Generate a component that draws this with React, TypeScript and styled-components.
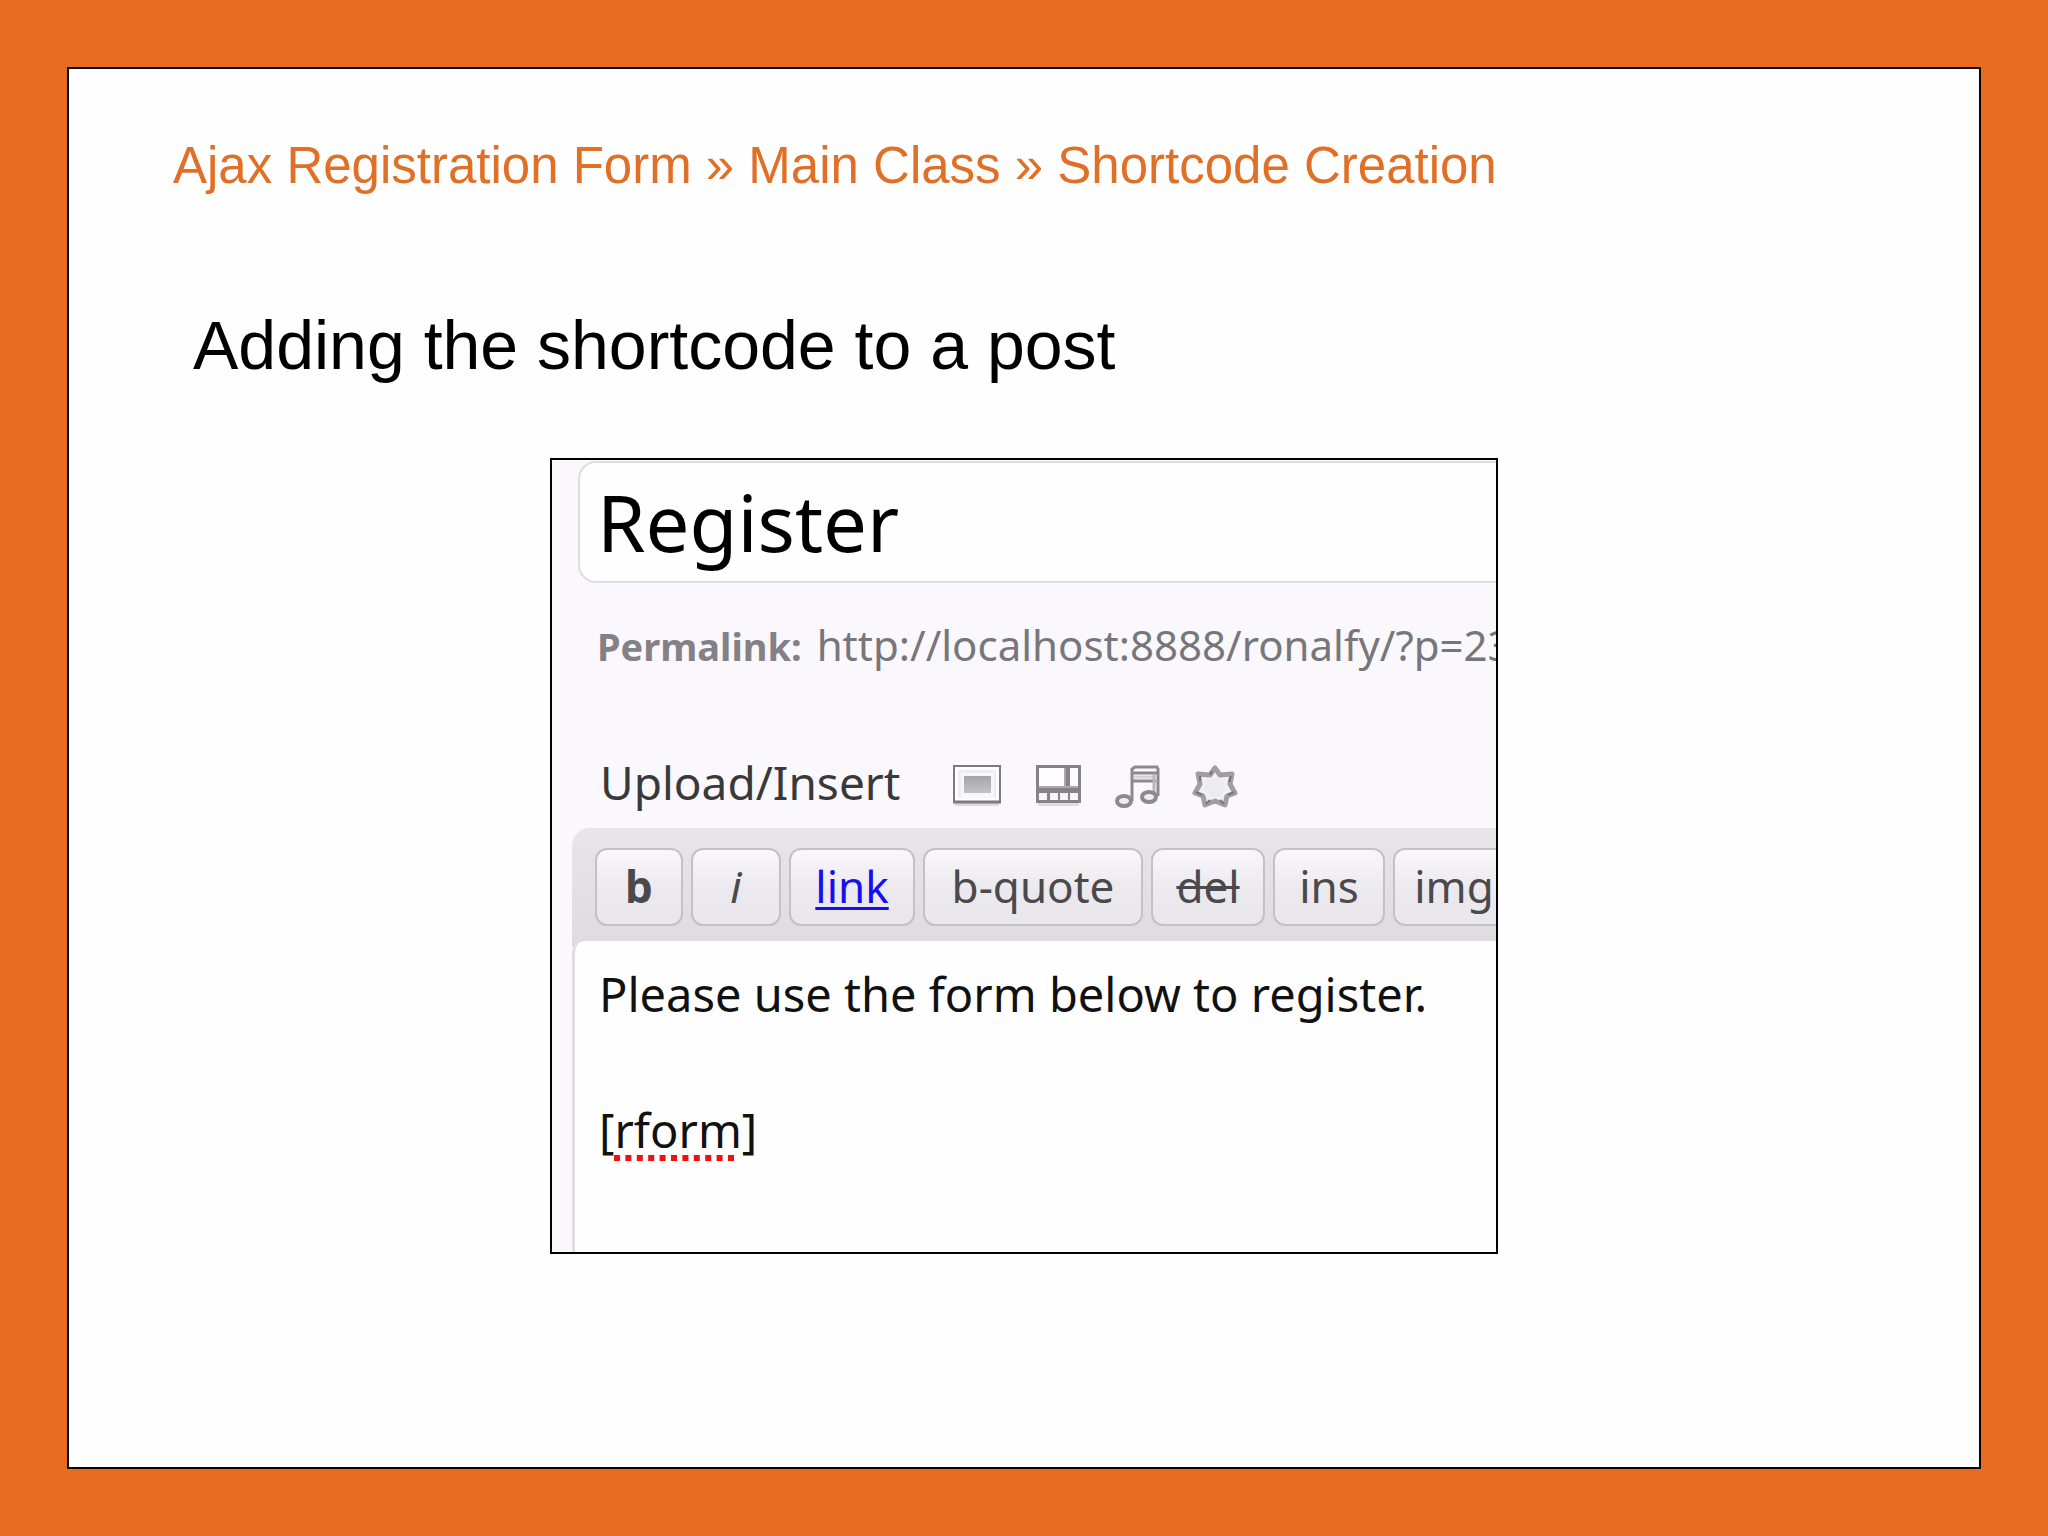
import React from 'react';
import styled, { createGlobalStyle, css } from 'styled-components';

const GlobalStyle = createGlobalStyle`
  *, *::before, *::after { box-sizing: border-box; }
  body {
    margin: 0;
    background: #e76c20;
    font-family: "Liberation Sans", Arial, sans-serif;
  }
`;

const uiFont = '"Noto Sans", "Open Sans", sans-serif';

const Page = styled.div`
  display: flex;
  min-height: 100vh;
  padding: 67px;
`;

const Slide = styled.main`
  flex: 1;
  min-width: 0;
  padding: 67px 104px;
  background: #fefefe;
  border: 2px solid #0c0603;
`;

const Breadcrumb = styled.h1`
  margin: 0 0 109px;
  font-size: 51px;
  font-weight: 400;
  line-height: 60px;
  color: #e07028;
`;

const Heading = styled.h2`
  margin: 0 0 73px;
  padding-left: 20px;
  font-size: 68px;
  font-weight: 400;
  line-height: 80px;
  color: #000;
`;

const Editor = styled.section`
  max-width: 948px;
  margin: 0 auto;
  padding-top: 1px;
  overflow: hidden;
  background: #faf8fc;
  border: 2px solid #000;
  font-family: ${uiFont};
`;

const TitleRow = styled.div`
  display: flex;
  padding-left: 26px;
`;

const TitleInput = styled.input`
  flex: 1;
  min-width: 0;
  height: 122px;
  padding: 0 17px;
  border: 2px solid #dfdde0;
  border-right: 0;
  border-radius: 18px 0 0 18px;
  background: #fefefe;
  font-family: ${uiFont};
  font-size: 78px;
  color: #000;
  outline: none;
`;

const Permalink = styled.p`
  margin: 34px 0 76px;
  padding-left: 45px;
  font-size: 42px;
  line-height: 56px;
  white-space: nowrap;
  color: #77767a;
`;

const PermalinkLabel = styled.strong`
  margin-right: 4px;
  font-size: 38px;
  font-weight: 700;
  color: #838186;
`;

const MediaRow = styled.div`
  display: flex;
  align-items: center;
  gap: 28px;
  margin-bottom: 14px;
  padding-left: 48px;
`;

const MediaLabel = styled.span`
  margin-right: 24px;
  font-size: 46px;
  line-height: 64px;
  color: #39383b;
`;

const MediaButton = styled.button`
  display: block;
  padding: 0;
  border: 0;
  background: none;
  svg { display: block; }
`;

const EditorBody = styled.div`
  margin-left: 20px;
  background: linear-gradient(#e7e5e9 0px, #dedce0 113px, #dedce0 119px, #faf8fc 119px);
  border-top-left-radius: 18px;
`;

const Toolbar = styled.div`
  display: flex;
  gap: 8px;
  padding: 20px 0 15px 23px;
`;

type Look = 'plain' | 'bold' | 'italic' | 'link' | 'strike';

const looks = {
  plain: css``,
  bold: css`font-weight: 700;`,
  italic: css`font-style: italic;`,
  link: css`
    color: #1610ee;
    text-decoration: underline;
    text-decoration-thickness: 3px;
    text-underline-offset: 4px;
  `,
  strike: css`
    text-decoration: line-through;
    text-decoration-thickness: 3px;
  `,
};

const QuickTag = styled.button<{ $width: number; $look: Look }>`
  flex: 0 0 ${(p) => p.$width}px;
  height: 78px;
  padding: 0 0 2px;
  border: 2px solid #c3c1c5;
  border-radius: 12px;
  background: linear-gradient(#f9f7fb, #ebe9ed 55%, #e9e7eb);
  font-family: ${uiFont};
  font-size: 44px;
  line-height: 60px;
  color: #4a494c;
  ${(p) => looks[p.$look]}
`;

const TextWrap = styled.div`
  position: relative;
`;

const PostText = styled.textarea`
  display: block;
  width: 100%;
  height: 311px;
  padding: 19px 16px 0 24px;
  border: 0;
  border-left: 3px solid #dfdde0;
  border-top-left-radius: 12px;
  background: #fefefe;
  font-family: ${uiFont};
  font-size: 47px;
  line-height: 68px;
  color: #111;
  resize: none;
  outline: none;
  overflow: hidden;
`;

const SpellingMark = styled.svg`
  position: absolute;
  left: 42px;
  top: 214px;
  pointer-events: none;
`;

const tags: { label: string; width: number; look: Look }[] = [
  { label: 'b', width: 88, look: 'bold' },
  { label: 'i', width: 90, look: 'italic' },
  { label: 'link', width: 126, look: 'link' },
  { label: 'b-quote', width: 220, look: 'plain' },
  { label: 'del', width: 114, look: 'strike' },
  { label: 'ins', width: 112, look: 'plain' },
  { label: 'img', width: 122, look: 'plain' },
];

const ImageIcon = () => (
  <svg width="52" height="52" viewBox="0 0 52 52" aria-hidden="true">
    <defs>
      <linearGradient id="picture" x1="0" y1="0" x2="0" y2="1">
        <stop offset="0" stopColor="#a5a4a7" />
        <stop offset="1" stopColor="#c4c3c6" />
      </linearGradient>
    </defs>
    <rect x="3" y="47" width="44" height="3" fill="#dddbdf" />
    <rect x="2" y="10" width="46" height="36" fill="#fdfcfe" stroke="#7d7b7f" strokeWidth="2" />
    <path d="M1 46h48" stroke="#7d7b7f" strokeWidth="3" />
    <rect x="6" y="14" width="38" height="28" fill="#eeedf0" />
    <rect x="9" y="17" width="33" height="25" fill="#f8f7fa" />
    <rect x="12" y="20" width="27" height="17" fill="url(#picture)" />
  </svg>
);

const VideoIcon = () => (
  <svg width="52" height="52" viewBox="0 0 52 52" aria-hidden="true">
    <rect x="6" y="47" width="41" height="3" fill="#dddbdf" />
    <rect x="4" y="9" width="45" height="38" fill="#858387" />
    <rect x="7" y="12" width="26" height="18" fill="#fdfcfe" />
    <rect x="38" y="12" width="8" height="18" fill="#fdfcfe" />
    <path d="M7 37h8v7H7zM18 37h8v7h-8zM28 37h8v7h-8zM38 37h8v7h-8z" fill="#f6f5f8" />
    <path d="M33 12v18M7 31h39" stroke="#aaa8ac" strokeWidth="2" />
  </svg>
);

const MusicIcon = () => (
  <svg width="52" height="52" viewBox="0 0 52 52" aria-hidden="true">
    <path d="M20 45V13l3-2h22l1 2v27" fill="none" stroke="#8c8a8e" strokeWidth="3" />
    <path d="M20 17h26M20 25h24" stroke="#8c8a8e" strokeWidth="3" />
    <path d="M22 21h20" stroke="#d5d3d7" strokeWidth="3" />
    <path d="M42 18v20" stroke="#b7b5b9" strokeWidth="3" />
    <ellipse cx="12" cy="45" rx="7" ry="5" fill="#eeedf0" stroke="#8c8a8e" strokeWidth="4" />
    <ellipse cx="37" cy="41" rx="7" ry="5" fill="#eeedf0" stroke="#8c8a8e" strokeWidth="4" />
  </svg>
);

const GearIcon = () => (
  <svg width="52" height="52" viewBox="0 0 52 52" aria-hidden="true">
    <path
      d="M23 12L28 19L40 18L38 28L43 37L35 40L33 49L23 45L13 49L11 40L3 37L8 28L6 18L18 19Z"
      fill="#f1f0f3"
      stroke="#a09ea2"
      strokeWidth="5"
      strokeLinejoin="round"
    />
    <circle cx="23" cy="31" r="10" fill="#ecebee" />
    <path d="M8 20v5M39 20l-2 6M4 36l6 3M42 36l-6 3M14 48l4-4M32 48l-4-4M20 15l-2 4" stroke="#77757a" strokeWidth="2" />
  </svg>
);

const media = [
  { label: 'Add an image', Icon: ImageIcon },
  { label: 'Add video', Icon: VideoIcon },
  { label: 'Add audio', Icon: MusicIcon },
  { label: 'Add media', Icon: GearIcon },
];

export default function App() {
  return (
    <>
      <GlobalStyle />
      <Page>
        <Slide>
          <Breadcrumb>Ajax Registration Form » Main Class » Shortcode Creation</Breadcrumb>
          <Heading>Adding the shortcode to a post</Heading>
          <Editor>
            <TitleRow>
              <TitleInput type="text" aria-label="Post title" defaultValue="Register" />
            </TitleRow>
            <Permalink>
              <PermalinkLabel>Permalink:</PermalinkLabel> http://localhost:8888/ronalfy/?p=23
            </Permalink>
            <MediaRow>
              <MediaLabel>Upload/Insert</MediaLabel>
              {media.map(({ label, Icon }) => (
                <MediaButton key={label} type="button" aria-label={label}>
                  <Icon />
                </MediaButton>
              ))}
            </MediaRow>
            <EditorBody>
              <Toolbar>
                {tags.map((tag) => (
                  <QuickTag key={tag.label} type="button" $width={tag.width} $look={tag.look}>
                    {tag.label}
                  </QuickTag>
                ))}
              </Toolbar>
              <TextWrap>
                <PostText
                  aria-label="Post content"
                  spellCheck={false}
                  defaultValue={'Please use the form below to register.\n\n[rform]'}
                />
                <SpellingMark width="122" height="6" viewBox="0 0 122 6" aria-hidden="true">
                  <path d="M0 3h122" stroke="#f01010" strokeWidth="6" strokeDasharray="6 5.4" />
                </SpellingMark>
              </TextWrap>
            </EditorBody>
          </Editor>
        </Slide>
      </Page>
    </>
  );
}
